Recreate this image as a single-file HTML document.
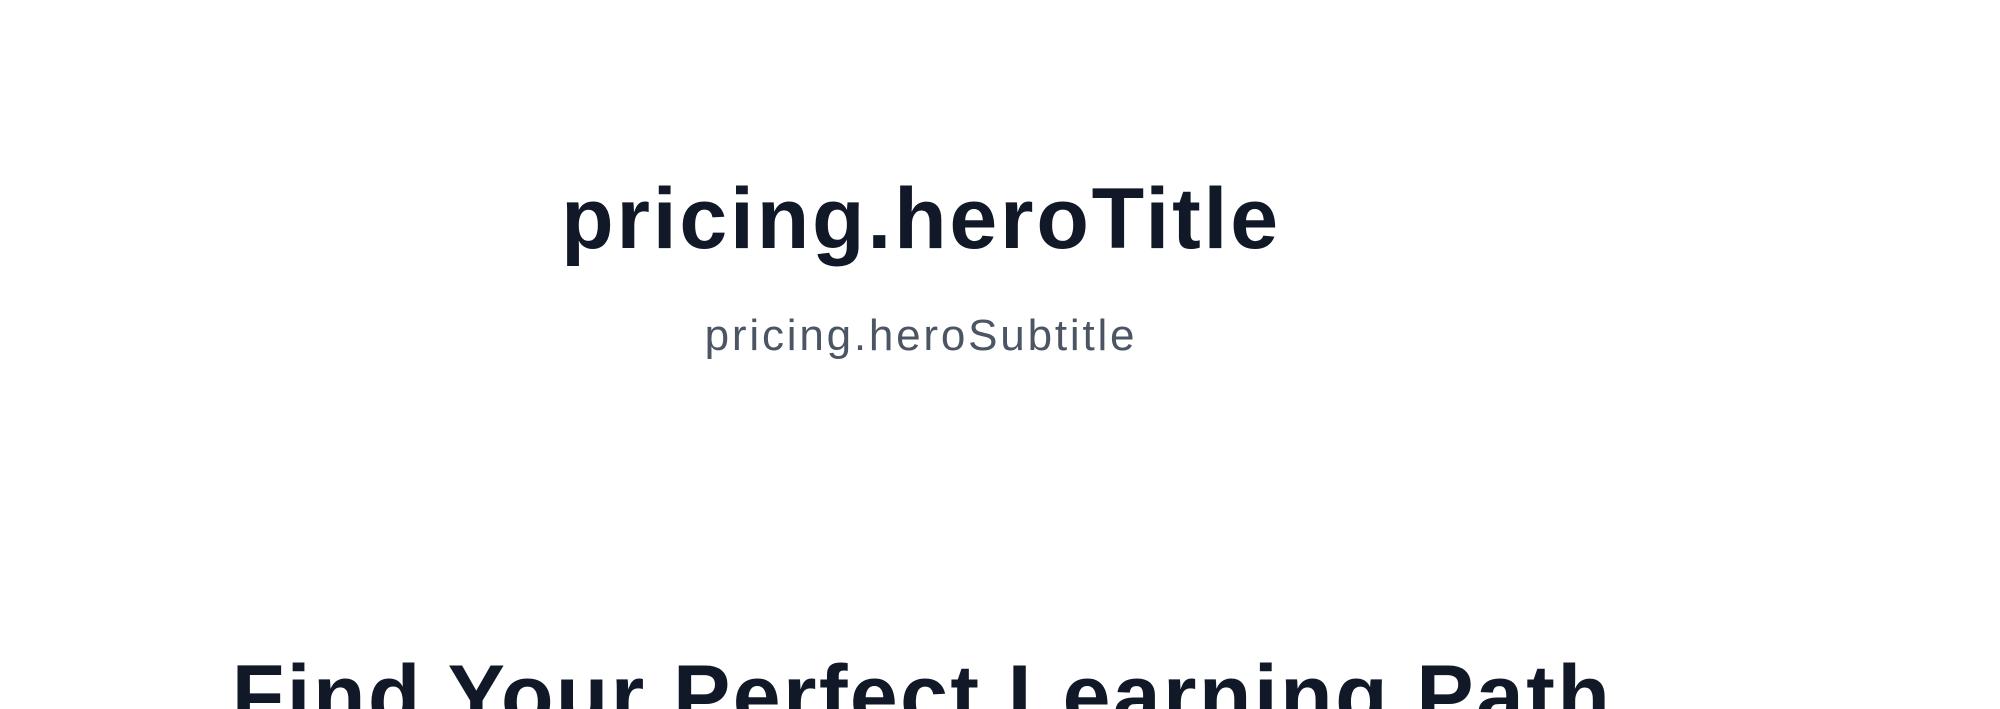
<!DOCTYPE html>
<html><head><meta charset="utf-8"><style>
html,body{margin:0;padding:0;background:#fff;width:2000px;height:709px;overflow:hidden;position:relative}
div{position:absolute;left:0;width:1842px;text-align:center;line-height:1;white-space:nowrap;font-family:"Liberation Sans",sans-serif}
.t{top:176px;font-size:86px;font-weight:700;color:#111827;letter-spacing:2.8px}
.s{top:314px;font-size:44px;color:#4b5563;letter-spacing:2.8px}
.h{top:653px;left:1px;font-size:86px;font-weight:700;color:#111827;letter-spacing:2.4px}
</style></head><body>
<div class="t">pricing.heroTitle</div>
<div class="s">pricing.heroSubtitle</div>
<div class="h">Find Your Perfect Learning Path</div>
</body></html>
